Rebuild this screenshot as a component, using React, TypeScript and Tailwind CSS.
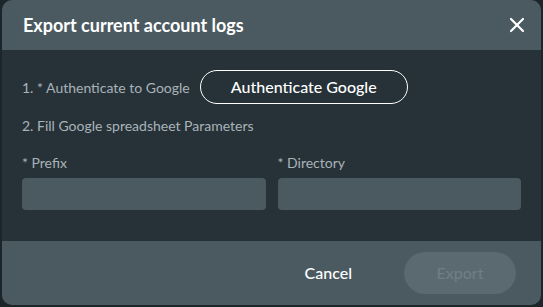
import { X } from "lucide-react";

export default function App() {
  return (
    <div className="h-[307px] w-[543px] bg-[#1c252a] pl-[2px] pr-[2px] pb-[2px] font-['Lato',_'Liberation_Sans',_sans-serif]">
      <div className="flex h-full flex-col overflow-hidden rounded-[10px] bg-[#263238]">
        <div className="flex h-[50px] shrink-0 items-center justify-between bg-[#4b5a61] pl-[21px] pr-[12px]">
          <h1 className="text-[18px] font-bold text-white">Export current account logs</h1>
          <X className="h-[24px] w-[24px] text-white" strokeWidth={2.2} />
        </div>
        <div className="flex-1 px-[20px] pt-[20px]">
          <div className="flex items-center gap-[10px]">
            <span className="text-[14px] text-[#aab3b8]">1. * Authenticate to Google</span>
            <button className="h-[34px] w-[208px] rounded-full border border-white text-[16px] font-medium text-white">
              Authenticate Google
            </button>
          </div>
          <p className="mt-[12px] text-[14px] leading-[20px] text-[#aab3b8]">2. Fill Google spreadsheet Parameters</p>
          <div className="mt-[17px] grid grid-cols-2 gap-[12px]">
            <div>
              <label className="block text-[14px] leading-[20px] text-[#aab3b8]">* Prefix</label>
              <div className="mt-[5px] h-[32px] rounded-[4px] bg-[#4b5a61]" />
            </div>
            <div>
              <label className="block text-[14px] leading-[20px] text-[#aab3b8]">* Directory</label>
              <div className="mt-[5px] h-[32px] rounded-[4px] bg-[#4b5a61]" />
            </div>
          </div>
        </div>
        <div className="flex h-[64px] shrink-0 items-center justify-end gap-[52px] bg-[#4b5a61] pr-[25px]">
          <button className="text-[16px] font-medium text-white">Cancel</button>
          <button className="h-[42px] w-[112px] rounded-full bg-[#5a6a70] text-[16px] font-medium text-[#6f7e85]">
            Export
          </button>
        </div>
      </div>
    </div>
  );
}
